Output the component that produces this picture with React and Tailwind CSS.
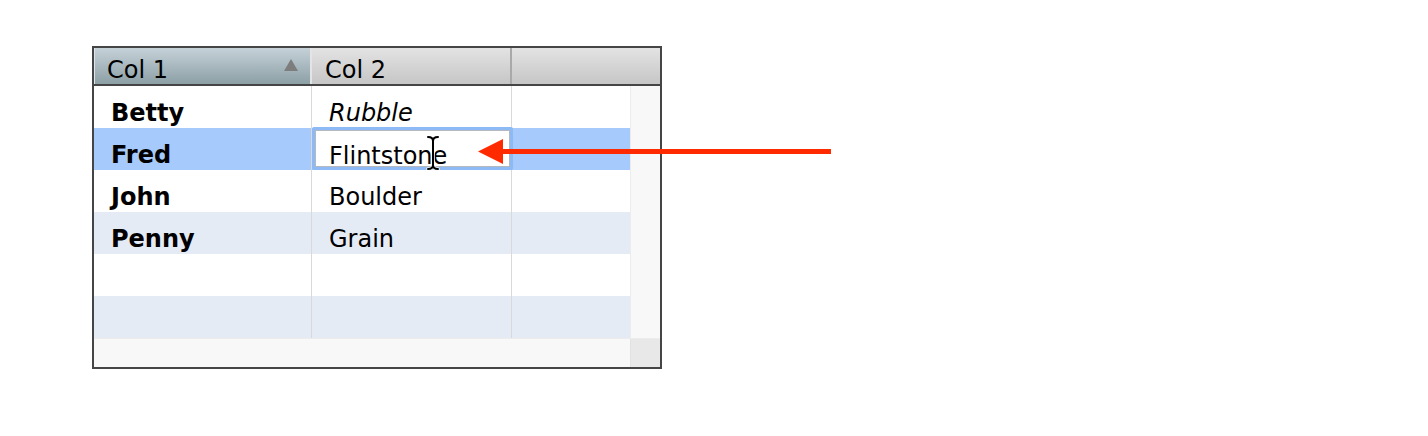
const rows = [
  { first: "Betty", last: "Rubble", italic: true, bg: "bg-white" },
  { first: "Fred", last: "Flintstone", selected: true, bg: "bg-[#a6cafc]" },
  { first: "John", last: "Boulder", bg: "bg-white" },
  { first: "Penny", last: "Grain", bg: "bg-[#e5ebf5]" },
  { first: "", last: "", bg: "bg-white" },
  { first: "", last: "", bg: "bg-[#e5ebf5]" },
];

function Row({ row }) {
  return (
    <div className={`flex h-[42px] ${row.bg}`}>
      <div className="w-[218px] shrink-0 border-r border-[#d9d9d9] pl-[17px] pt-[11px] font-bold leading-[32px]">
        {row.first}
      </div>
      {row.selected ? (
        <div className="w-[201px] shrink-0 -mt-[1px] h-[43px] rounded-[2px] border-[3px] border-[#8dbaf4] bg-white">
          <div className="h-full border border-[#b4b9c0] pl-[13px] pt-[9px] leading-[32px]">{row.last}</div>
        </div>
      ) : (
        <div
          className={`w-[200px] shrink-0 border-r border-[#d9d9d9] pl-[17px] pt-[11px] leading-[32px] ${
            row.italic ? "italic" : ""
          }`}
        >
          {row.last}
        </div>
      )}
      <div className="flex-1" />
    </div>
  );
}

export default function App() {
  return (
    <div
      className="min-h-[436px] bg-white pl-[92px] pt-[46px] text-[24px] text-black"
      style={{ fontFamily: '"DejaVu Sans", "Noto Sans", sans-serif' }}
    >
      <div className="relative w-[570px]">
        <div className="border-2 border-[#454545] bg-white">
          {/* header */}
          <div className="flex h-[38px] border-b-2 border-[#454545]">
            <div className="relative w-[216px] shrink-0 border-l border-[#dfe6ea] bg-gradient-to-b from-[#c6d1d8] to-[#8ca0a6] pl-[12px] pt-[10px] leading-none">
              Col 1
              <svg className="absolute right-[12px] top-[11px]" width="14" height="12" viewBox="0 0 14 12">
                <path d="M7 0 L14 12 L0 12 Z" fill="#7d7d7d" />
              </svg>
            </div>
            <div className="w-[2px] shrink-0 bg-[#e4e4e4]" />
            <div className="w-[198px] shrink-0 bg-gradient-to-b from-[#e3e3e3] to-[#c6c6c6] pl-[13px] pt-[10px] leading-none">
              Col 2
            </div>
            <div className="w-[2px] shrink-0 bg-[#a9a9a9]" />
            <div className="flex-1 bg-gradient-to-b from-[#e3e3e3] to-[#c6c6c6]" />
          </div>
          {/* body */}
          <div className="flex">
            <div className="w-[536px] shrink-0">
              {rows.map((r, i) => (
                <Row key={i} row={r} />
              ))}
            </div>
            <div className="flex-1 border-l border-[#ececec] bg-[#f8f8f8]" />
          </div>
          <div className="flex h-[29px] border-t border-[#ececec]">
            <div className="w-[536px] shrink-0 bg-[#f8f8f8]" />
            <div className="flex-1 border-l border-[#e2e2e2] bg-[#e8e8e8]" />
          </div>
        </div>

        {/* red arrow annotation */}
        <svg className="absolute left-[386px] top-[92px]" width="360" height="27" viewBox="0 0 360 27">
          <path d="M0 13.5 L25 1 L25 26 Z" fill="#ff2a00" />
          <rect x="24" y="11" width="329" height="5" fill="#ff2a00" />
        </svg>

        {/* text cursor */}
        <svg className="absolute left-[334px] top-[89px]" width="14" height="36" viewBox="0 0 14 36">
          <g fill="none" strokeLinecap="round">
            <path
              d="M2 2 Q7 2 7 6 Q7 2 12 2 M7 6 L7 30 M2 34 Q7 34 7 30 Q7 34 12 34"
              stroke="white"
              strokeWidth="3.5"
            />
            <path
              d="M2 2 Q7 2 7 6 Q7 2 12 2 M7 6 L7 30 M2 34 Q7 34 7 30 Q7 34 12 34"
              stroke="black"
              strokeWidth="2"
            />
          </g>
        </svg>
      </div>
    </div>
  );
}
